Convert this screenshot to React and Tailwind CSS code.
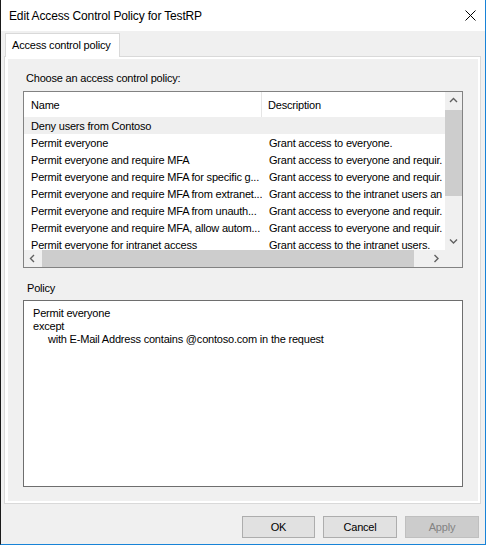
import React from "react";

const rows = [
  ["Deny users from Contoso", "", true],
  ["Permit everyone", "Grant access to everyone."],
  ["Permit everyone and require MFA", "Grant access to everyone and requir."],
  ["Permit everyone and require MFA for specific g...", "Grant access to everyone and requir."],
  ["Permit everyone and require MFA from extranet...", "Grant access to the intranet users an"],
  ["Permit everyone and require MFA from unauth...", "Grant access to everyone and requir."],
  ["Permit everyone and require MFA, allow autom...", "Grant access to everyone and requir."],
  ["Permit everyone for intranet access", "Grant access to the intranet users."],
];

function Chevron({ dir }) {
  const d = {
    up: "M1 5 L4.5 1.5 L8 5",
    down: "M1 1.5 L4.5 5 L8 1.5",
    left: "M5 1 L1.5 4.5 L5 8",
    right: "M1.5 1 L5 4.5 L1.5 8",
  }[dir];
  const horiz = dir === "left" || dir === "right";
  return (
    <svg width={horiz ? 7 : 9} height={horiz ? 9 : 7} viewBox={horiz ? "0 0 7 9" : "0 0 9 7"}>
      <path d={d} fill="none" stroke="#606060" strokeWidth="1.4" />
    </svg>
  );
}

function Button({ children, disabled }) {
  return (
    <div
      className={
        "h-[22px] flex items-center justify-center border " +
        (disabled
          ? "bg-[#cccccc] border-[#bfbfbf] text-[#838383]"
          : "bg-[#e1e1e1] border-[#adadad] text-black")
      }
    >
      {children}
    </div>
  );
}

export default function App() {
  return (
    <div className="w-[488px] h-[546px] bg-white font-['Liberation_Sans',Arial,sans-serif] text-[11px] leading-[13px] tracking-[-0.2px] text-black">
      <div className="w-[486px] h-[545px] flex flex-col bg-[#f0f0f0] border-l border-l-[#1a1a1a] border-r border-r-[#1883d7] border-b border-b-[#1883d7]">
        {/* Title bar */}
        <div className="h-[31px] shrink-0 bg-white flex items-center justify-between pl-[8px] pr-[8px]">
          <span className="text-[12px] leading-[15px] tracking-[-0.15px] pt-[2px]">Edit Access Control Policy for TestRP</span>
          <svg width="11" height="11" viewBox="0 0 11 11" className="mr-[1px]">
            <path d="M0.5 0.5 L10.5 10.5 M10.5 0.5 L0.5 10.5" stroke="#000" strokeWidth="1" />
          </svg>
        </div>

        {/* Tab row */}
        <div className="h-[25px] shrink-0 pt-[2px] pl-[4px] flex">
          <div className="relative z-10 h-[24px] w-[115px] bg-white border border-b-0 border-[#d9d9d9] pl-[6px] pt-[5px]">
            Access control policy
          </div>
        </div>

        {/* Tab panel */}
        <div className="ml-[3px] w-[477px] h-[448px] shrink-0 border border-[#d9d9d9] bg-white pl-[3px] pr-[2px] pt-[2px] pb-[2px] flex flex-col">
          <div className="flex-1 bg-[#f0f0f0] flex flex-col">
            <div className="mt-[13px] ml-[18px]">Choose an access control policy:</div>

            {/* List view */}
            <div className="mt-[6px] ml-[15px] w-[440px] h-[177px] shrink-0 border border-[#828282] bg-white grid grid-cols-[421px_17px] grid-rows-[158px_17px]">
              <div className="overflow-hidden">
                <div className="h-[25px] flex">
                  <div className="w-[238px] pl-[7px] pt-[2px] flex items-center border-r border-[#e5e5e5]">Name</div>
                  <div className="pl-[6px] pt-[2px] flex items-center">Description</div>
                </div>
                {rows.map(([name, desc, sel], i) => (
                  <div key={i} className={"h-[17px] pt-[1px] flex items-center " + (sel ? "bg-[#efefef]" : "")}>
                    <div className="w-[238px] shrink-0 pl-[7px] whitespace-nowrap overflow-hidden">{name}</div>
                    <div className="pl-[7px] whitespace-nowrap overflow-hidden w-[183px]">{desc}</div>
                  </div>
                ))}
              </div>
              {/* vertical scrollbar */}
              <div className="bg-[#f0f0f0] flex flex-col">
                <div className="h-[17px] flex items-center justify-center">
                  <Chevron dir="up" />
                </div>
                <div className="flex-1 pt-[1px]">
                  <div className="h-[86px] bg-[#cdcdcd]" />
                </div>
                <div className="h-[17px] flex items-center justify-center">
                  <Chevron dir="down" />
                </div>
              </div>
              {/* horizontal scrollbar */}
              <div className="bg-[#f0f0f0] flex">
                <div className="w-[17px] flex items-center justify-center">
                  <Chevron dir="left" />
                </div>
                <div className="flex-1 pl-[1px]">
                  <div className="h-full w-[372px] bg-[#cdcdcd]" />
                </div>
                <div className="w-[17px] flex items-center justify-center">
                  <Chevron dir="right" />
                </div>
              </div>
              <div className="bg-[#f0f0f0]" />
            </div>

            <div className="mt-[14px] ml-[19px]">Policy</div>

            {/* Policy box */}
            <div className="mt-[5px] ml-[15px] w-[440px] h-[187px] shrink-0 border border-[#6e6e6e] bg-white pl-[9px] pt-[6px]">
              <div>Permit everyone</div>
              <div>except</div>
              <div className="pl-[15px]">with E-Mail Address contains @contoso.com in the request</div>
            </div>
          </div>
        </div>

        {/* Buttons */}
        <div className="mt-[12px] flex justify-end gap-[8px] pr-[6px]">
          <div className="w-[73px]"><Button>OK</Button></div>
          <div className="w-[74px]"><Button>Cancel</Button></div>
          <div className="w-[74px]"><Button disabled>Apply</Button></div>
        </div>
      </div>
    </div>
  );
}
